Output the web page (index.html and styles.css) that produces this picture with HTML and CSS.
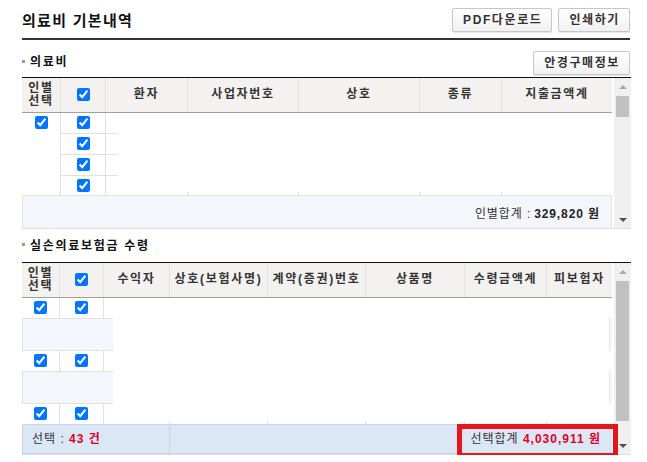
FILE: index.html
```html
<!DOCTYPE html>
<html lang="ko">
<head>
<meta charset="utf-8">
<title>의료비 기본내역</title>
<link rel="stylesheet" href="styles.css">
</head>
<body>
<div class="page">
  <div class="top">
    <h1 class="title">의료비 기본내역</h1>
    <div class="btns">
      <button class="btn" type="button">PDF다운로드</button>
      <button class="btn" type="button">인쇄하기</button>
    </div>
  </div>

  <div class="sec-head sec1">
    <h2 class="sec-title"><span class="bullet"></span>의료비</h2>
    <button class="btn" type="button">안경구매정보</button>
  </div>

  <div class="grid">
    <div class="main">
      <div class="thead cols1">
        <div class="th">인별<br>선택</div>
        <div class="th"><input type="checkbox" checked></div>
        <div class="th">환자</div>
        <div class="th">사업자번호</div>
        <div class="th">상호</div>
        <div class="th">종류</div>
        <div class="th">지출금액계</div>
      </div>
      <div class="tbody1 cols1">
        <div class="col vr"><div class="cb"><input type="checkbox" checked></div></div>
        <div class="col vr">
          <div class="cb r21 hr"><input type="checkbox" checked></div>
          <div class="cb r21 hr"><input type="checkbox" checked></div>
          <div class="cb r21 hr"><input type="checkbox" checked></div>
          <div class="cb"><input type="checkbox" checked></div>
        </div>
        <div class="col tick">
          <div class="r21 ext"></div>
          <div class="r21 ext"></div>
          <div class="r21 ext"></div>
        </div>
        <div class="col tick"></div>
        <div class="col tick"></div>
        <div class="col tick"></div>
        <div class="col"></div>
      </div>
      <div class="sum">인별합계 : <b class="sum-val">329,820 원</b></div>
    </div>
    <div class="sb">
      <div class="arr"><span class="up"></span></div>
      <div class="track"><div class="thumb thumb1"></div></div>
      <div class="arr"><span class="down"></span></div>
    </div>
  </div>

  <div class="sec-head sec2">
    <h2 class="sec-title"><span class="bullet"></span>실손의료보험금 수령</h2>
  </div>

  <div class="grid">
    <div class="main">
      <div class="thead cols2">
        <div class="th">인별<br>선택</div>
        <div class="th"><input type="checkbox" checked></div>
        <div class="th">수익자</div>
        <div class="th">상호(보험사명)</div>
        <div class="th">계약(증권)번호</div>
        <div class="th">상품명</div>
        <div class="th">수령금액계</div>
        <div class="th">피보험자</div>
      </div>
      <div class="tbody2">
        <div class="row cols2">
          <div class="cb vr"><input type="checkbox" checked></div>
          <div class="cb vr"><input type="checkbox" checked></div>
        </div>
        <div class="block"><div class="blk-l"></div><div class="blk-r"></div></div>
        <div class="row cols2">
          <div class="cb vr"><input type="checkbox" checked></div>
          <div class="cb vr"><input type="checkbox" checked></div>
        </div>
        <div class="block"><div class="blk-l"></div><div class="blk-r"></div></div>
        <div class="row cols2">
          <div class="cb vr"><input type="checkbox" checked></div>
          <div class="cb vr"><input type="checkbox" checked></div>
          <div class="tick"></div>
          <div class="tick"></div>
          <div class="tick"></div>
          <div class="tick"></div>
          <div class="tick"></div>
        </div>
      </div>
      <div class="foot">
        <div class="foot-l">선택 : <b class="red">43 건</b></div>
        <div class="foot-r">선택합계 <b class="red">4,030,911 원</b></div>
        <div class="mark"></div>
      </div>
    </div>
    <div class="sb">
      <div class="arr"><span class="up"></span></div>
      <div class="track"><div class="thumb thumb2"></div></div>
      <div class="arr"><span class="down"></span></div>
    </div>
  </div>
</div>
</body>
</html>
```

FILE: styles.css
```css
* { box-sizing: border-box; }
html, body { margin: 0; padding: 0; background: #fff; }
body {
  font-family: "Liberation Sans", "Noto Sans CJK KR", sans-serif;
  font-size: 12px;
  color: #333;
}
.page { width: 609px; margin-left: 22px; }

.top {
  display: flex;
  justify-content: space-between;
  align-items: center;
  margin-right: 1px;
  padding: 8px 0 6px 0;
  border-bottom: 2px solid #333;
}
.title {
  margin: 0;
  padding-top: 2px;
  font-size: 15px;
  font-weight: bold;
  line-height: 22px;
  letter-spacing: 1.3px;
  color: #111;
}
.btns { display: flex; gap: 6px; }
.btn {
  height: 24px;
  padding: 0 9px 0 10px;
  border: 1px solid #c6c6c6;
  border-radius: 2px;
  background: linear-gradient(#ffffff, #f1f1f1);
  box-shadow: 0 1px 0 #e6e6e6;
  font-family: "Liberation Sans", "Noto Sans CJK KR", sans-serif;
  font-size: 12px;
  font-weight: bold;
  line-height: 22px;
  letter-spacing: 1.6px;
  color: #333;
}

.sec-head {
  display: flex;
  justify-content: space-between;
  align-items: center;
  margin-right: 1px;
}
.sec1 { padding: 11px 0 2px 0; }
.sec2 { height: 33px; }
.sec-title {
  margin: 0;
  display: flex;
  align-items: center;
  font-size: 12px;
  font-weight: bold;
  line-height: 20px;
  letter-spacing: 1.7px;
  color: #111;
}
.sec1 .sec-title { margin-top: -2px; }
.bullet {
  width: 3px;
  height: 3px;
  background: #999;
  margin-right: 5px;
  margin-top: -2px;
}

.grid {
  display: flex;
  border-top: 1px solid #111;
  border-bottom: 1px solid #ddd;
}
.main { width: 590px; display: flex; flex-direction: column; }

.cols1 { display: grid; grid-template-columns: 39px 45px 82px 111px 121px 82px 110px; }
.cols2 { display: grid; grid-template-columns: 38px 44px 66px 98px 98px 99px 82px 65px; }

.thead {
  height: 35px;
  background: #f3f2f0;
  border-bottom: 1px solid #a0a0a0;
}
.th {
  display: flex;
  align-items: center;
  justify-content: center;
  text-align: center;
  font-weight: bold;
  letter-spacing: 1.7px;
  line-height: 13px;
  padding-bottom: 1px;
  color: #333;
  border-right: 1px solid #e2e2e2;
}
.th:last-child { border-right: 0; }

input[type="checkbox"] {
  width: 13px;
  height: 13px;
  margin: 0;
}

.vr { border-right: 1px solid #e2e2e2; }
.hr { border-bottom: 1px solid #e2e2e2; }
.cb {
  display: flex;
  justify-content: center;
  align-items: flex-start;
  padding-top: 3px;
}

.tbody1 { height: 82px; }
.r21 { height: 21px; }
.ext {
  background: linear-gradient(#e2e2e2, #e2e2e2) no-repeat left bottom / 12px 1px;
}
.tick {
  background: linear-gradient(#e2e2e2, #e2e2e2) no-repeat right bottom / 1px 3px;
}

.sum {
  height: 33px;
  display: flex;
  align-items: center;
  justify-content: flex-end;
  padding-right: 11px;
  background: #f4f6fb;
  border: 1px solid #e4e4e4;
  border-bottom: 0;
  letter-spacing: 0.9px;
  color: #333;
}
.sum-val { color: #222; margin-left: 3px; }

.tbody2 { display: flex; flex-direction: column; }
.row { height: 20px; }
.block {
  height: 33px;
  display: flex;
  justify-content: space-between;
}
.blk-l {
  width: 91px;
  background: #f3f6fb;
  border: 1px solid #e2e2e2;
  border-right: 0;
}
.blk-r {
  width: 3px;
  background: #f3f6fb;
  border-left: 1px solid #e1e8f2;
}

.foot {
  position: relative;
  height: 30px;
  display: flex;
  background: #dce7f6;
  border: 1px solid #c6d5ea;
  border-right: 0;
  letter-spacing: 1px;
  line-height: 28px;
  color: #333;
}
.foot-l {
  width: 147px;
  padding-left: 9px;
  border-right: 1px solid #c6d5ea;
}
.foot-r {
  flex: 1;
  text-align: right;
  padding-right: 11px;
}
.red { color: #e2001f; }
.mark {
  position: absolute;
  left: 434px;
  top: -1px;
  width: 161px;
  height: 34px;
  border: 5px solid #e8141c;
}

.sb {
  width: 17px;
  margin-left: 2px;
  background: #f0f0f0;
  display: flex;
  flex-direction: column;
}
.arr {
  height: 17px;
  display: flex;
  align-items: center;
  justify-content: center;
}
.up {
  width: 0;
  height: 0;
  border-left: 4px solid transparent;
  border-right: 4px solid transparent;
  border-bottom: 4px solid #a8a8a8;
}
.down {
  width: 0;
  height: 0;
  border-left: 4px solid transparent;
  border-right: 4px solid transparent;
  border-top: 4px solid #505050;
}
.track { flex: 1; padding: 1px 2px 0 2px; }
.thumb { background: #c1c1c1; }
.thumb1 { height: 21px; }
.thumb2 { height: 140px; }
```
